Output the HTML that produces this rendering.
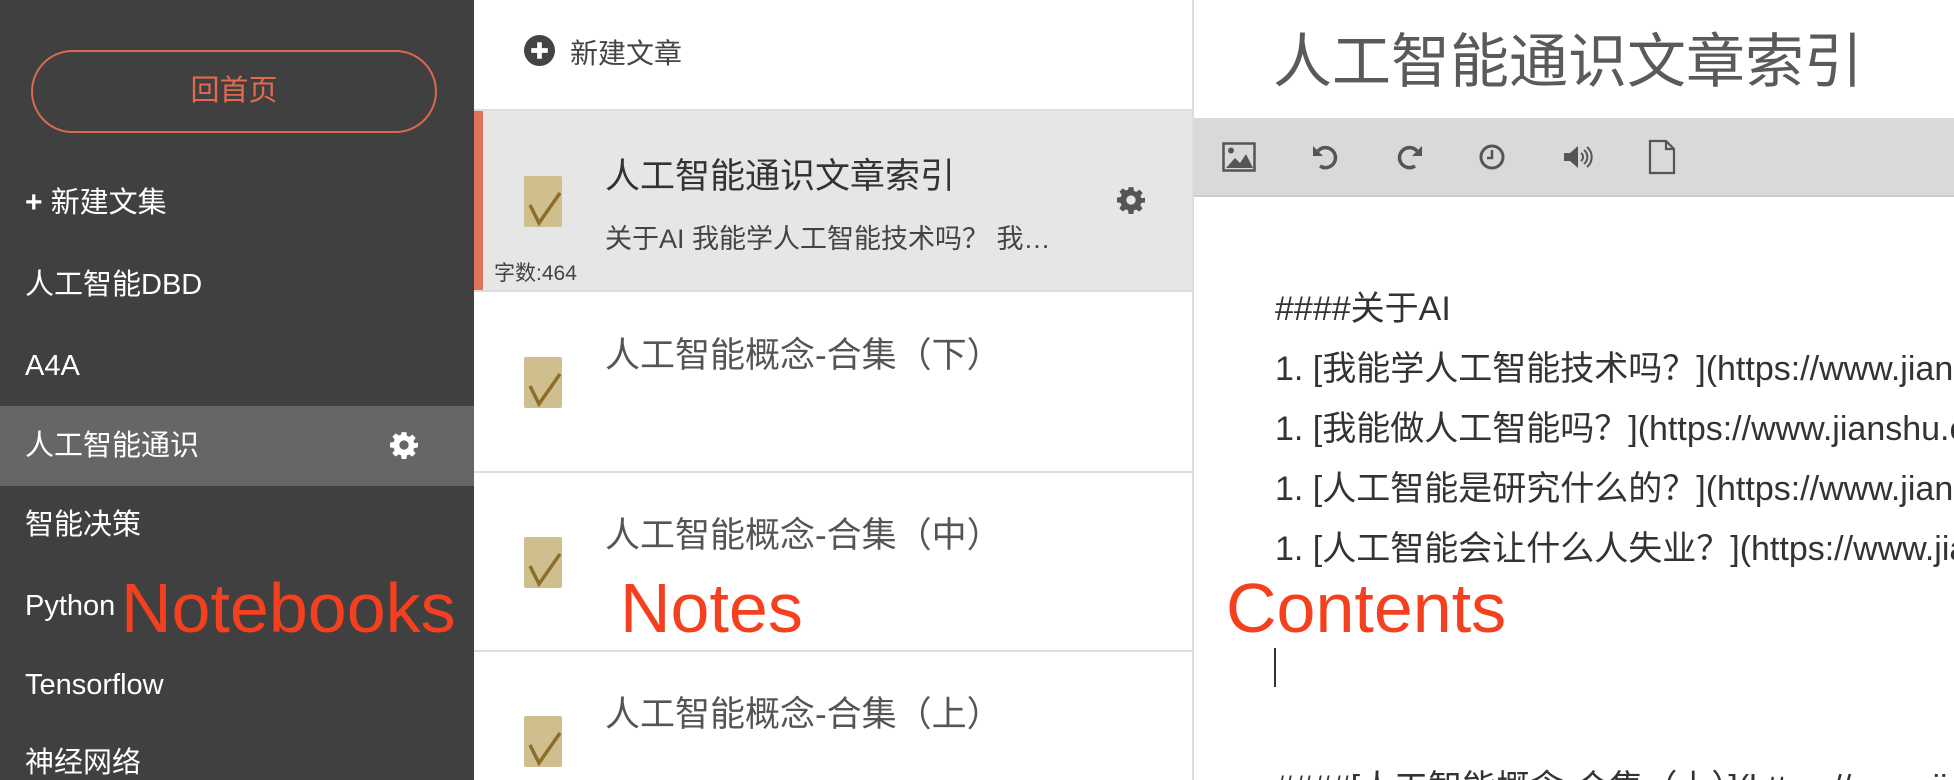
<!DOCTYPE html>
<html><head><meta charset="utf-8"><style>
*{margin:0;padding:0;box-sizing:border-box}
html,body{width:1954px;height:780px;overflow:hidden}
body{background:#fff;font-family:"Liberation Sans","Noto Sans CJK SC",sans-serif;position:relative}
#wrap{position:absolute;left:0;top:0;width:1954px;height:780px;overflow:hidden}
.a{position:absolute;white-space:nowrap}
#side{position:absolute;left:0;top:0;width:474px;height:780px;background:#404040}
.si{position:absolute;left:25px;color:#fff;font-size:29px;line-height:34px}
.red{color:#f4401e;font-size:70px;line-height:80px}
.cb{position:absolute;left:524px;width:38px;height:51px;background:#cfbf8e;border-radius:2px}
.ttl{position:absolute;left:605px;font-size:35px;color:#555;white-space:nowrap}
.ct{position:absolute;left:1275px;font-size:34px;color:#333;white-space:nowrap;line-height:40px}
.ic{position:absolute;top:142px}
</style></head><body><div id="wrap">
<div id="side">
  <div class="a" style="left:31px;top:50px;width:406px;height:83px;border:2px solid #d9694f;border-radius:42px;color:#e26a50;font-size:29px;text-align:center;line-height:79px">回首页</div>
  <div class="si" style="top:186px"><span style="font-weight:bold;font-size:30px">+</span> 新建文集</div>
  <div class="si" style="top:268px">人工智能DBD</div>
  <div class="si" style="top:349px">A4A</div>
  <div style="position:absolute;left:0;top:406px;width:474px;height:80px;background:#666"></div>
  <div class="si" style="top:429px">人工智能通识</div>
  <svg class="a" style="left:390px;top:431px" width="28" height="28" viewBox="0 0 24 24"><path fill="#fff" d="M10 1h4l.6 3.2 1.9.8 2.7-1.9 2.8 2.8-1.9 2.7.8 1.9L24 10v4l-3.2.6-.8 1.9 1.9 2.7-2.8 2.8-2.7-1.9-1.9.8L14 24h-4l-.6-3.2-1.9-.8-2.7 1.9-2.8-2.8 1.9-2.7-.8-1.9L0 14v-4l3.2-.6.8-1.9-1.9-2.7 2.8-2.8 2.7 1.9 1.9-.8z M12 8a4 4 0 1 0 0 8a4 4 0 1 0 0-8z" fill-rule="evenodd"/></svg>
  <div class="si" style="top:508px">智能决策</div>
  <div class="si" style="top:589px">Python</div>
  <div class="si" style="top:668px">Tensorflow</div>
  <div class="si" style="top:746px">神经网络</div>
  <div class="a red" style="left:121px;top:568px">Notebooks</div>
</div>
<div style="position:absolute;left:474px;top:0;width:720px;height:780px;background:#fff;border-right:2px solid #ddd"></div>
<svg class="a" style="left:524px;top:35px" width="31" height="31" viewBox="0 0 30 30"><circle cx="15" cy="15" r="15" fill="#444"/><path d="M15 7v16M7 15h16" stroke="#fff" stroke-width="4.5"/></svg>
<div class="a" style="left:570px;top:32px;font-size:28px;color:#444">新建文章</div>
<div style="position:absolute;left:474px;top:109px;width:718px;height:2px;background:#ddd"></div>
<div style="position:absolute;left:474px;top:111px;width:718px;height:179px;background:#e6e6e6"></div>
<div style="position:absolute;left:474px;top:111px;width:9px;height:179px;background:#e0735c"></div>
<div style="position:absolute;left:474px;top:290px;width:718px;height:2px;background:#ddd"></div>
<div style="position:absolute;left:474px;top:471px;width:718px;height:2px;background:#ddd"></div>
<div style="position:absolute;left:474px;top:650px;width:718px;height:2px;background:#ddd"></div>
<div class="cb" style="top:176px"></div>
<div class="cb" style="top:357px"></div>
<div class="cb" style="top:537px"></div>
<div class="cb" style="top:716px"></div>
<svg class="a" style="left:524px;top:0" width="40" height="780"><g fill="none" stroke="#8c6d2a" stroke-width="3.5"><path d="M6 205l9 18 21-30"/><path d="M6 386l9 18 21-30"/><path d="M6 566l9 18 21-30"/><path d="M6 745l9 18 21-30"/></g></svg>
<div class="ttl" style="top:148px;color:#333">人工智能通识文章索引</div>
<div class="a" style="left:605px;top:217px;font-size:27px;color:#444">关于AI 我能学人工智能技术吗？ 我…</div>
<div class="a" style="left:494px;top:257px;font-size:21px;color:#444">字数:464</div>
<svg class="a" style="left:1117px;top:186px" width="28" height="28" viewBox="0 0 24 24"><path fill="#555" d="M10 1h4l.6 3.2 1.9.8 2.7-1.9 2.8 2.8-1.9 2.7.8 1.9L24 10v4l-3.2.6-.8 1.9 1.9 2.7-2.8 2.8-2.7-1.9-1.9.8L14 24h-4l-.6-3.2-1.9-.8-2.7 1.9-2.8-2.8 1.9-2.7-.8-1.9L0 14v-4l3.2-.6.8-1.9-1.9-2.7 2.8-2.8 2.7 1.9 1.9-.8z M12 8a4 4 0 1 0 0 8a4 4 0 1 0 0-8z" fill-rule="evenodd"/></svg>
<div class="ttl" style="top:327px">人工智能概念-合集（下）</div>
<div class="ttl" style="top:507px">人工智能概念-合集（中）</div>
<div class="ttl" style="top:686px">人工智能概念-合集（上）</div>
<div class="a red" style="left:620px;top:568px">Notes</div>
<div class="a" style="left:1273px;top:22px;font-size:59px;color:#5a5a5a;line-height:80px">人工智能通识文章索引</div>
<div style="position:absolute;left:1194px;top:118px;width:760px;height:79px;background:#d9d9d9;border-bottom:2px solid #ccc"></div>
<svg class="ic" style="left:1222px" width="34" height="30" viewBox="0 0 34 30"><rect x="1.5" y="1.5" width="31" height="27" fill="none" stroke="#555" stroke-width="2.5"/><circle cx="9" cy="8.5" r="3" fill="#555"/><path d="M4 26l9-10 5 5 6-9 7 14z" fill="#555"/></svg>
<svg class="ic" style="left:1311px" width="28" height="30" viewBox="0 0 28 30"><path d="M7 9a10 10 0 1 1 2 15" fill="none" stroke="#555" stroke-width="3.5"/><path d="M2 4v10h10z" fill="#555"/></svg>
<svg class="ic" style="left:1396px" width="28" height="30" viewBox="0 0 28 30"><path d="M21 9a10 10 0 1 0-2 15" fill="none" stroke="#555" stroke-width="3.5"/><path d="M26 4v10H16z" fill="#555"/></svg>
<svg class="ic" style="left:1478px" width="28" height="30" viewBox="0 0 28 30"><circle cx="14" cy="15" r="11" fill="none" stroke="#555" stroke-width="3"/><path d="M14 8v8h-5" fill="none" stroke="#555" stroke-width="2.5"/></svg>
<svg class="ic" style="left:1562px" width="32" height="30" viewBox="0 0 32 30"><path d="M2 11h6l8-7v22l-8-7H2z" fill="#555"/><path d="M19 11a5 5 0 0 1 0 8M22 8a9 9 0 0 1 0 14M25 5a13 13 0 0 1 0 20" fill="none" stroke="#555" stroke-width="2"/></svg>
<svg class="ic" style="left:1648px;top:139px" width="28" height="36" viewBox="0 0 28 36"><path d="M2 2h16l8 8v24H2z M18 2v8h8" fill="none" stroke="#555" stroke-width="2.2"/></svg>
<div class="ct" style="top:289px">####关于AI</div>
<div class="ct" style="top:349px">1. [我能学人工智能技术吗？](https://www.jianshu.com</div>
<div class="ct" style="top:409px">1. [我能做人工智能吗？](https://www.jianshu.com</div>
<div class="ct" style="top:469px">1. [人工智能是研究什么的？](https://www.jianshu.com</div>
<div class="ct" style="top:529px">1. [人工智能会让什么人失业？](https://www.jianshu.com</div>
<div class="a red" style="left:1226px;top:568px">Contents</div>
<div style="position:absolute;left:1274px;top:648px;width:2px;height:39px;background:#333"></div>
<div class="ct" style="top:768px">####[人工智能概念-合集（上）](https://www.jianshu.com</div>
</div></body></html>
